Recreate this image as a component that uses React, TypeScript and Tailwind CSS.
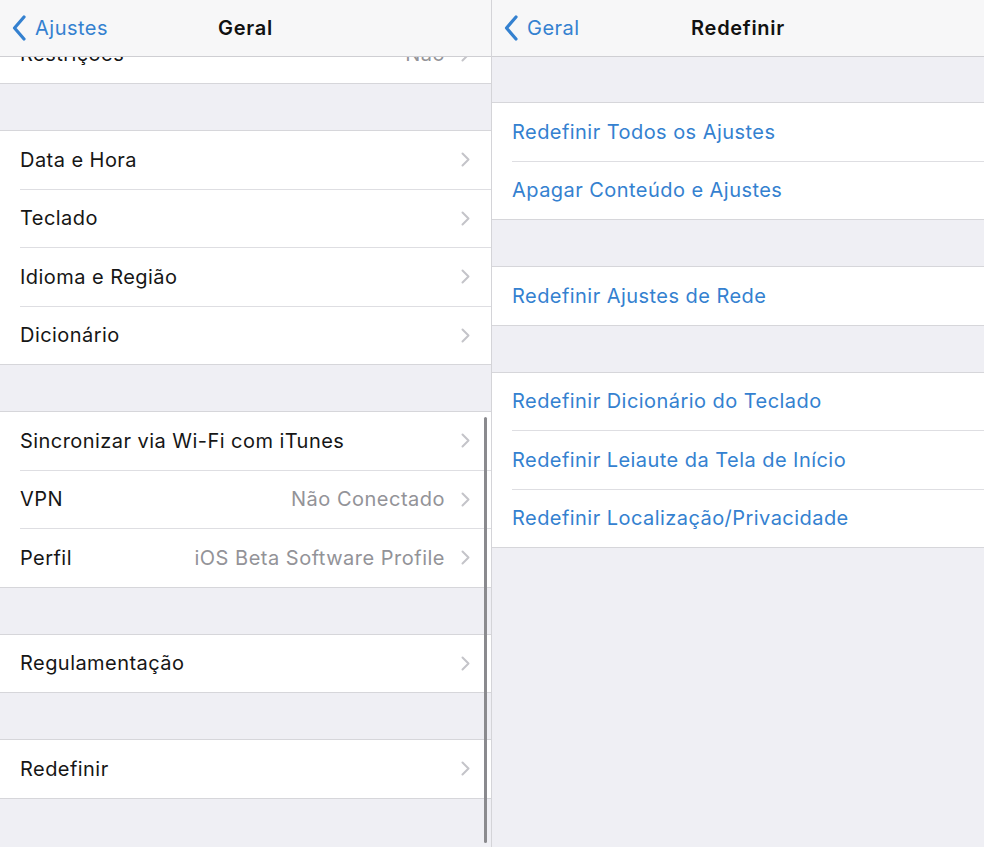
import React from "react";

const FONT = { fontFamily: "Inter, 'Liberation Sans', sans-serif" };

function Chevron() {
  return (
    <svg width="9" height="15" viewBox="0 0 9 15" className="shrink-0">
      <path d="M1.5 1.5 L7.5 7.5 L1.5 13.5" fill="none" stroke="#c4c4c9" strokeWidth="2" strokeLinecap="round" strokeLinejoin="round" />
    </svg>
  );
}

function BackChevron() {
  return (
    <svg width="14" height="26" viewBox="0 0 14 26" className="shrink-0">
      <path d="M12 2 L2.5 13 L12 24" fill="none" stroke="#3481d0" strokeWidth="3.2" strokeLinecap="round" strokeLinejoin="round" />
    </svg>
  );
}

function NavBar({ back, title }: { back: string; title: string }) {
  return (
    <div className="relative h-[57px] shrink-0 bg-[#f7f7f8] border-b border-[#cfcfd3] flex items-center z-10">
      <div className="flex items-center gap-[9px] pl-[12px]">
        <BackChevron />
        <span className="text-[20px] text-[#3481d0] tracking-[0.5px]">{back}</span>
      </div>
      <div className="absolute inset-0 flex items-center justify-center pointer-events-none">
        <span className="text-[20px] font-semibold text-[#111] tracking-[0.7px]">{title}</span>
      </div>
    </div>
  );
}

function Row({ label, value, chevron = true, blue = false }: { label: string; value?: string; chevron?: boolean; blue?: boolean }) {
  return (
    <div className="h-[57.5px] flex items-center pl-[20px] pr-[21px] bg-white">
      <span className={"text-[20px] tracking-[0.45px] whitespace-nowrap " + (blue ? "text-[#3481d0]" : "text-[#161616]")}>{label}</span>
      <div className="flex-1" />
      {value && <span className="text-[20px] text-[#939398] tracking-[0.5px] mr-[16px] whitespace-nowrap">{value}</span>}
      {chevron && <Chevron />}
    </div>
  );
}

function Sep() {
  return (
    <div className="bg-white">
      <div className="ml-[20px] h-px bg-[#dedee2]" />
    </div>
  );
}

function Group({ children }: { children: React.ReactNode }) {
  const items = React.Children.toArray(children);
  return (
    <div className="border-y border-[#d6d6da]">
      {items.map((c, i) => (
        <React.Fragment key={i}>
          {i > 0 && <Sep />}
          {c}
        </React.Fragment>
      ))}
    </div>
  );
}

export default function App() {
  return (
    <div className="w-[984px] h-[847px] flex bg-[#efeff4] overflow-hidden" style={FONT}>
      <div className="relative w-[492px] h-full flex flex-col border-r border-[#d4d4d8]">
        <NavBar back="Ajustes" title="Geral" />
        <div className="flex-1 overflow-hidden flex flex-col">
          <div className="-mt-[31.5px] border-b border-[#d6d6da]">
            <Row label="Restrições" value="Não" />
          </div>
          <div className="h-[46px] shrink-0" />
          <Group>
            <Row label="Data e Hora" />
            <Row label="Teclado" />
            <Row label="Idioma e Região" />
            <Row label="Dicionário" />
          </Group>
          <div className="h-[46px] shrink-0" />
          <Group>
            <Row label="Sincronizar via Wi-Fi com iTunes" />
            <Row label="VPN" value="Não Conectado" />
            <Row label="Perfil" value="iOS Beta Software Profile" />
          </Group>
          <div className="h-[46px] shrink-0" />
          <Group>
            <Row label="Regulamentação" />
          </Group>
          <div className="h-[46px] shrink-0" />
          <Group>
            <Row label="Redefinir" />
          </Group>
        </div>
        <div className="absolute left-[484px] top-[417px] w-[2.5px] h-[426px] rounded-full bg-[#8a8a8e]" />
      </div>
      <div className="flex-1 h-full flex flex-col">
        <NavBar back="Geral" title="Redefinir" />
        <div className="h-[45px] shrink-0" />
        <Group>
          <Row label="Redefinir Todos os Ajustes" chevron={false} blue />
          <Row label="Apagar Conteúdo e Ajustes" chevron={false} blue />
        </Group>
        <div className="h-[46px] shrink-0" />
        <Group>
          <Row label="Redefinir Ajustes de Rede" chevron={false} blue />
        </Group>
        <div className="h-[46px] shrink-0" />
        <Group>
          <Row label="Redefinir Dicionário do Teclado" chevron={false} blue />
          <Row label="Redefinir Leiaute da Tela de Início" chevron={false} blue />
          <Row label="Redefinir Localização/Privacidade" chevron={false} blue />
        </Group>
      </div>
    </div>
  );
}
